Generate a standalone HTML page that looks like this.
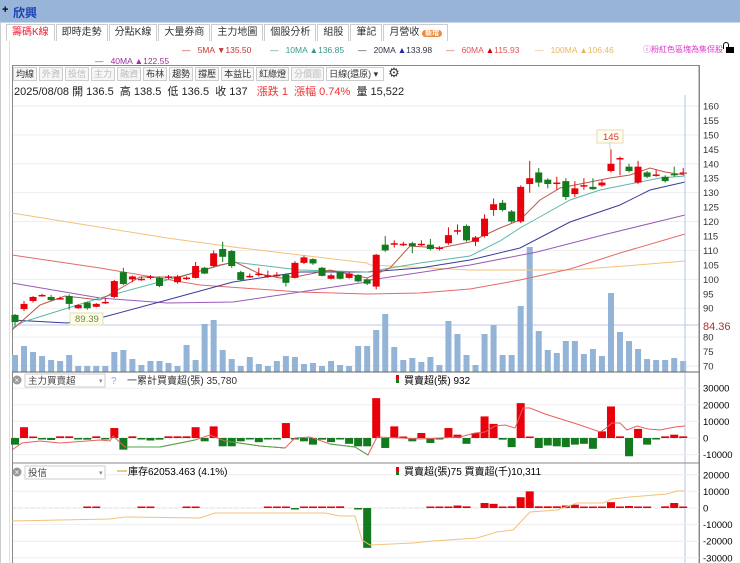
<!DOCTYPE html>
<html><head><meta charset="utf-8"><style>
*{margin:0;padding:0;box-sizing:border-box}
body{width:740px;height:563px;overflow:hidden;background:#fff;font-family:"Liberation Sans","Noto Sans CJK TC",sans-serif;font-size:10px;color:#333;position:relative}
.abs{position:absolute;white-space:nowrap}
.top{left:0;top:0;width:740px;height:23px;background:#98b4d9;border-bottom:1px solid #c8d6ea}
.tabs{left:6px;top:24px;height:17px;display:flex}
.tabs span{border:1px solid #ccc;border-bottom:none;padding:0 5px;font-size:10px;line-height:15px;margin-right:1px;color:#333;background:#fff}
.tb{left:13px;top:67px;display:flex;gap:2px}
.tb span{border:1px solid #ccc;padding:0 2px;font-size:9px;line-height:12px;color:#333;background:#f6f6f6}
.tb span.d{color:#bbb}
.lg{font-size:8.5px;top:45px}
</style></head><body>
<div class="abs top"><span class="abs" style="left:2px;top:4px;font-size:11px;font-weight:bold;color:#000">+</span><span class="abs" style="left:13px;top:4px;font-size:12px;font-weight:bold;color:#1a3fb0">欣興</span></div>
<div class="abs" style="left:0;top:23px;width:1px;height:540px;background:#ccc"></div>
<div class="abs" style="left:9px;top:23px;width:1px;height:540px;background:#ddd"></div>
<div class="abs tabs"><span style="color:#e23">籌碼K線</span><span>即時走勢</span><span>分點K線</span><span>大量券商</span><span>主力地圖</span><span>個股分析</span><span>組股</span><span>筆記</span><span>月營收 <b style="background:#f08a3a;color:#fff;border-radius:6px;font-size:7px;padding:0 3px">新增</b></span></div>
<div class="abs lg" style="left:182px;color:#c33">— &nbsp;&nbsp;5MA ▼135.50</div>
<div class="abs lg" style="left:270px;color:#3a9a8a">— &nbsp;&nbsp;10MA ▲136.85</div>
<div class="abs lg" style="left:358px;color:#334">— &nbsp;&nbsp;20MA <span style="color:#22a">▲</span>133.98</div>
<div class="abs lg" style="left:446px;color:#d55">— &nbsp;&nbsp;60MA <span style="color:#c00">▲</span>115.93</div>
<div class="abs lg" style="left:535px;color:#e8b860">— &nbsp;&nbsp;100MA ▲106.46</div>
<div class="abs" style="left:643px;top:44px;font-size:8px;color:#d3c">ⓘ粉紅色區塊為集保股</div>
<div class="abs" style="left:726px;top:47px;width:8px;height:6px;background:#000"></div>
<div class="abs" style="left:723px;top:42px;width:6px;height:7px;border:1.5px solid #000;border-bottom:none;border-radius:3px 3px 0 0"></div>
<div class="abs" style="left:95px;top:56px;font-size:8.5px;color:#939">— &nbsp;&nbsp;40MA ▲122.55</div>
<div class="abs" style="left:12px;top:65px;width:688px;height:498px;border:1px solid #888;border-bottom:none"></div>
<div class="abs tb"><span>均線</span><span class="d">外資</span><span class="d">投信</span><span class="d">主力</span><span class="d">融資</span><span>布林</span><span>趨勢</span><span>撐壓</span><span>本益比</span><span>紅綠燈</span><span class="d">分價圖</span><span style="background:#fff;width:58px">日線(還原) ▾</span><span style="border:none;background:none;font-size:13px;line-height:12px">⚙</span></div>
<div class="abs" style="left:14px;top:83px;font-size:11px;color:#222">2025/08/08 開 136.5 &nbsp;高 138.5 &nbsp;低 136.5 &nbsp;收 137 &nbsp;&nbsp;<span style="color:#e33">漲跌 1 &nbsp;漲幅 0.74%</span> &nbsp;量 15,522</div>
<svg class="abs" style="left:0;top:0" width="740" height="563" id="s"></svg>
<script>
var D=[[87.7,85.2,88,84],[89.7,91.5,92.5,89],[92.5,93.9,94.2,92],[94.4,94.6,95,94],[93.9,92.8,94.6,92.5],[93.5,93.5,94,93],[94.2,91.5,94.8,89.5],[90,91.1,91.4,89.8],[92,90,92.2,89.5],[90.5,91.5,91.8,90.3],[92.2,92.2,93.5,91.5],[93.9,99.4,99.8,93.5],[102.5,98.4,104,98],[100,101,101.3,99],[100.2,100.2,101,99.5],[101,101,101.5,100],[100.5,97.7,101,97.3],[100.8,101,101.5,100],[99,101,101.5,98.5],[100.3,100.6,101,99.8],[100.5,104.6,106,100.3],[104,102,104.3,101.8],[104.6,109,110,104.3],[110.5,107.8,113,106],[109.8,104.6,110.2,104],[102.5,99.8,103,99.3],[101.2,101.2,102,100.5],[102,102,104,101],[101.4,101.4,103,100.5],[101.3,101.6,102.5,100.8],[101.7,98.8,102,97.5],[100.5,105.7,106.3,100.3],[105.7,107.6,108.2,105.3],[107,105.5,107.3,105],[104,101.2,104.3,101],[100.2,101.4,102,100],[102.5,100.2,102.8,100],[100.5,102,102.5,100.2],[101.5,99.3,101.8,99],[100,98.5,100.3,98],
[97.5,108.5,108.8,96.5],[112,110,115,109.5],[112.5,112.5,113.5,111],[112.3,112.3,113,111.5],[112.5,111.5,113,109],[112.3,112.3,113.5,111.5],[112,110.5,114,110],[111,111,111.5,110],[112.5,115.3,118,112],[117,117,119,115.5],[118.5,113.5,119,113],[113,114.5,115,111.5],[115,121,122.5,114.5],[124,126,128,122],[126.5,124,127.5,123.5],[123.5,120,124,119.5],[120,132,132.5,119.5],[133,135,141,130],[137,133.5,138.5,132],[134.5,133,135,131.5],[133,133.5,135.5,131],[134,128.5,135,127.5],[129.5,131.5,134,128.5],[132.6,132.6,135,131],[132,131.2,135,131],[132.5,133.5,134.5,132],[137.5,140,145,137],[142,142,142.5,136],[139,137.5,140,137],[133.5,139,141,133],[137,135.5,137.5,135],[136.3,136.3,138,135.5],[135.5,134,136,133.5],[136.5,136,139,135.5],[136.5,137,138.5,136.3]];
var V=[17,26,20,16,12,11,17,6,6,6,6,20,22,13,7,11,11,9,6,27,12,48,52,22,13,6,15,8,6,11,16,15,8,9,6,11,7,6,26,26,42,58,25,12,14,10,15,7,51,38,17,7,38,47,17,17,66,125,41,22,19,31,31,18,23,16,79,40,31,23,13,12,12,14,11];
var M=[-4,6.5,0.5,-0.5,-1.2,1,1,-0.8,-1,1,-0.3,6,-7,1,-0.8,-1.5,-1,1,1,1,6.5,-2,7,-5,-5,-2,-0.5,-2.5,-0.5,-0.5,9,-0.5,-2,-4,-1,-2.5,-0.5,-3.5,-5,-5,24,-6,7,0.5,-2,3,-3,-0.3,6,2,-3.5,3,13,8.5,-1,-5.5,21,0.5,-6,-4.5,-5,-5.5,-4,-3.5,-6.5,4,19,1,-11,5.5,-4,-0.3,1,2,1];
var T=[0,0,0,0,0,0,0,0,0.3,0.3,0,0,0,0,0.3,0.3,0,0,0,0.3,0.3,0,0,0,0,0,0,0,0.3,0.3,0.3,-0.2,0.3,0.3,0.3,0.5,1,0,-0.3,-24,0,0,0,0,0,0,0.3,0.3,0.3,1.5,1,0,3,2.5,0.5,1,6.5,10,1,1,1,1.5,2,0.3,0.3,0.3,3.5,0.8,1.2,0.8,0.5,0,1,3,0.3];
function y(p){return 106+(160-p)*2.889}
var s='',R='#e8000b',G='#137a1e';
for(var p=70;p<=160;p+=10){s+='<line x1="13" x2="699" y1="'+y(p)+'" y2="'+y(p)+'" stroke="#eee"/>';}
for(var p=70;p<=160;p+=5){if(p==85)continue;s+='<text x="703" y="'+(y(p)+3.5)+'" font-size="9.5" fill="#333">'+p+'</text>';}
s+='<text x="703" y="330" font-size="11" fill="#a33">84.36</text>';
s+='<line x1="13" x2="699" y1="325" y2="325" stroke="#bcc8e8"/>';
for(var i=0;i<75;i++){var x=15+i*9.03;s+='<rect x="'+(x-3)+'" y="'+(372-V[i])+'" width="6" height="'+V[i]+'" fill="#93b4d6"/>';}
function pl(pts,c,w){return '<polyline fill="none" stroke="'+c+'" stroke-width="'+(w||1)+'" points="'+pts+'"/>'}
s+=pl('12,213 167,238 233,247 367,263 370,265 470,270 570,270 637,265 685,261','#f2c27a');
s+=pl('12,255 100,268 200,285 300,292 367,294 420,293 470,289 520,280 570,269 620,253 685,234','#e46a6a');
s+=pl('12,283 100,298 167,303 233,302 300,292 367,282 370,280 470,265 537,252 603,235 685,215','#9a5ab8');
s+=pl('12,320 67,323 100,318 167,300 233,282 300,272 367,272 420,268 470,260 520,248 570,222 620,205 650,190 685,182','#3a3c9a');
s+=pl('12,328 23,322 100,298 167,280 233,262 300,270 367,272 420,263 470,256 500,241 520,228 545,214 570,200 600,190 640,182 660,178 685,176','#5ab8a8');
s+=pl('12,330 40,305 65,296 100,300 140,277 180,277 220,265 235,262 260,274 280,278 300,276 330,270 367,278 390,268 410,246 440,248 470,242 500,228 520,220 540,200 560,188 590,182 610,178 630,175 650,168 665,172 685,175','#b85a4a');
for(var i=0;i<75;i++){var d=D[i],x=15+i*9.03,c=d[1]>=d[0]?R:G;var t=y(Math.max(d[0],d[1])),b=y(Math.min(d[0],d[1]));if(b-t<1.2){b=t+1.5}
s+='<line x1="'+x+'" x2="'+x+'" y1="'+y(d[2])+'" y2="'+y(d[3])+'" stroke="'+c+'"/><rect x="'+(x-3.5)+'" y="'+t+'" width="7" height="'+(b-t)+'" fill="'+c+'"/>';}
s+='<rect x="70" y="313" width="33" height="12" fill="#fffde8" stroke="#dde0b0"/><text x="75" y="322" font-size="9.5" fill="#6a8a40">89.39</text>';
s+='<rect x="597" y="130" width="26" height="13" fill="#fffdf0" stroke="#e8d8b0"/><text x="603" y="140" font-size="9.5" fill="#d33">145</text><line x1="610" x2="610" y1="143" y2="149" stroke="#ccc"/>';
s+='<line x1="685" x2="685" y1="95" y2="563" stroke="#b8c4ec"/>';
s+='<line x1="12" x2="700" y1="372" y2="372" stroke="#666"/><line x1="699" x2="699" y1="65" y2="563" stroke="#888"/>';
var z2=438,k2=1.66;
[30000,20000,10000,0,-10000].forEach(function(v){var yy=z2-v/1000*k2;s+='<line x1="13" x2="699" y1="'+yy+'" y2="'+yy+'" stroke="#eee"/><text x="703" y="'+(yy+3.5)+'" font-size="9.5">'+v+'</text>'});
s+='<line x1="13" x2="685" y1="438" y2="438" stroke="#ccc" stroke-dasharray="3,3"/>';
for(var i=0;i<75;i++){var x=15+i*9.03,v=M[i],h=Math.max(Math.abs(v)*k2,1.5);s+='<rect x="'+(x-4)+'" y="'+(v>=0?z2-h:z2)+'" width="8" height="'+h+'" fill="'+(v>=0?R:G)+'"/>';}
s+=pl('12,450 22,443 40,441 60,443 100,440 110,441 113,436 125,447 160,447 195,440 210,435 225,441 260,446 285,448 295,438 310,437 330,444 355,447 368,455 377,437 400,438 420,439 440,438 460,437 475,433 485,432 495,426 505,425 515,428 523,408 530,408 545,414 580,425 600,432 605,429 612,423 620,423 627,430 637,426 648,429 660,430 675,427 685,426','#e86060');
s+=pl('125,447 160,447 195,440','#4aa84a')+pl('225,441 260,446 285,448','#4aa84a')+pl('330,444 355,447 368,455','#4aa84a');
s+='<line x1="12" x2="700" y1="463" y2="463" stroke="#888"/>';
var z3=508,k3=1.66;
[20000,10000,0,-10000,-20000,-30000].forEach(function(v){var yy=z3-v/1000*k3;s+='<line x1="13" x2="699" y1="'+yy+'" y2="'+yy+'" stroke="#eee"/><text x="703" y="'+(yy+3.5)+'" font-size="9.5">'+v+'</text>'});
s+='<line x1="13" x2="685" y1="508" y2="508" stroke="#ddd" stroke-dasharray="3,3"/>';
for(var i=0;i<75;i++){var x=15+i*9.03,v=T[i];if(!v)continue;var h=Math.max(Math.abs(v)*k3,1.5);s+='<rect x="'+(x-4)+'" y="'+(v>=0?z3-h:z3)+'" width="8" height="'+h+'" fill="'+(v>=0?R:G)+'"/>';}
s+=pl('12,521 60,520 110,519 125,517 200,518 215,513 300,513 325,513 340,516 355,516 362,540 370,545 413,543 433,541 477,538 497,532 513,530 530,512 557,510 577,503 603,503 612,499 630,497 667,494 677,491 685,491','#f0c27a');
function hdr(yy,name){return '<circle cx="17" cy="'+(yy+7)+'" r="4.5" fill="#999"/><text x="14.5" y="'+(yy+10)+'" font-size="8" fill="#fff">×</text><rect x="25" y="'+(yy+1)+'" width="80" height="13" fill="#fff" stroke="#ccc"/><text x="28" y="'+(yy+11)+'" font-size="9.5" fill="#444">'+name+'</text><text x="99" y="'+(yy+10)+'" font-size="7" fill="#888">▾</text>'}
s+=hdr(373,'主力買賣超')+'<text x="111" y="384" font-size="10" fill="#9ab">?</text><text x="127" y="384" font-size="10" fill="#333">一累計買賣超(張) 35,780</text>';
s+='<rect x="396" y="375" width="3" height="4" fill="'+R+'"/><rect x="396" y="379" width="3" height="4" fill="'+G+'"/><text x="404" y="384" font-size="10">買賣超(張) 932</text>';
s+=hdr(465,'投信')+'<line x1="117" x2="127" y1="471" y2="471" stroke="#e8b860" stroke-width="1.5"/><text x="128" y="475" font-size="10">庫存62053.463 (4.1%)</text>';
s+='<rect x="396" y="467" width="3" height="4" fill="'+R+'"/><rect x="396" y="471" width="3" height="4" fill="'+G+'"/><text x="404" y="475" font-size="10">買賣超(張)75 買賣超(千)10,311</text>';
document.getElementById('s').innerHTML=s;
</script>
</body></html>
